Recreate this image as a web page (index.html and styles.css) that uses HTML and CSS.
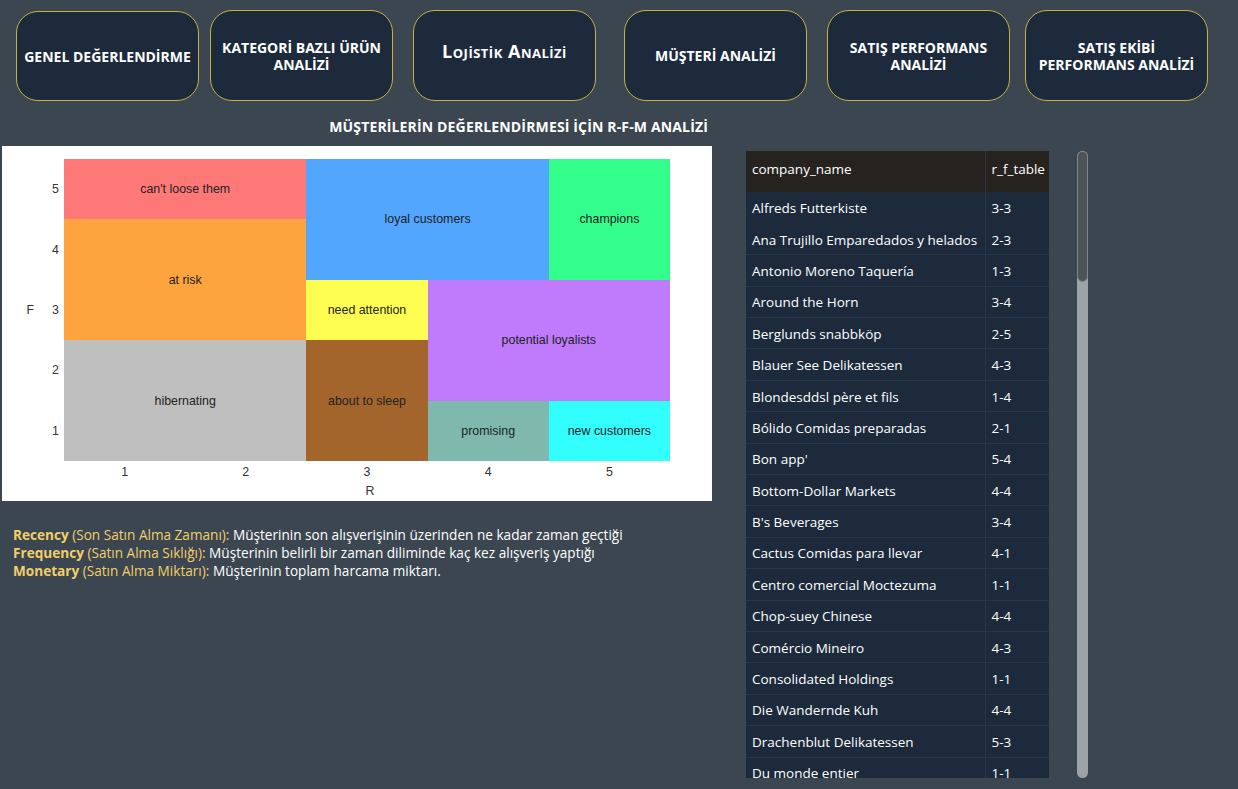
FILE: index.html
```html
<!DOCTYPE html>
<html lang="tr">
<head>
<meta charset="utf-8">
<title>Müşteri Analizi</title>
<link rel="stylesheet" href="styles.css">
</head>
<body>
<nav class="nav">
  <div class="btn b1">GENEL DEĞERLENDİRME</div>
  <div class="btn b2">KATEGORİ BAZLI ÜRÜN<br>ANALİZİ</div>
  <div class="btn b3 smallcaps">Lojistik Analizi</div>
  <div class="btn b4">MÜŞTERİ ANALİZİ</div>
  <div class="btn b5">SATIŞ PERFORMANS<br>ANALİZİ</div>
  <div class="btn b6">SATIŞ EKİBİ<br>PERFORMANS ANALİZİ</div>
</nav>
<main class="main">
  <section class="left">
    <h1 class="title">MÜŞTERİLERİN DEĞERLENDİRMESİ İÇİN R-F-M ANALİZİ</h1>
    <div class="chart">
      <div class="f-label">F</div>
      <div class="y-ticks"><span>5</span><span>4</span><span>3</span><span>2</span><span>1</span></div>
      <div class="plot">
        <div class="cell c-cant">can't loose them</div>
        <div class="cell c-risk">at risk</div>
        <div class="cell c-hib">hibernating</div>
        <div class="cell c-loyal">loyal customers</div>
        <div class="cell c-champ">champions</div>
        <div class="cell c-need">need attention</div>
        <div class="cell c-sleep">about to sleep</div>
        <div class="cell c-pot">potential loyalists</div>
        <div class="cell c-prom">promising</div>
        <div class="cell c-new">new customers</div>
      </div>
      <div class="x-ticks"><span>1</span><span>2</span><span>3</span><span>4</span><span>5</span></div>
      <div class="r-label">R</div>
    </div>
    <div class="legend">
      <p><b class="gold">Recency</b> <span class="gold">(Son Satın Alma Zamanı):</span> Müşterinin son alışverişinin üzerinden ne kadar zaman geçtiği</p>
      <p><b class="gold">Frequency</b> <span class="gold">(Satın Alma Sıklığı):</span> Müşterinin belirli bir zaman diliminde kaç kez alışveriş yaptığı</p>
      <p><b class="gold">Monetary</b> <span class="gold">(Satın Alma Miktarı):</span> Müşterinin toplam harcama miktarı.</p>
    </div>
  </section>
  <section class="right">
    <div class="table-wrap">
      <table class="tbl">
        <colgroup><col class="col-name"><col class="col-rf"></colgroup>
        <thead>
          <tr><th class="th-name">company_name</th><th>r_f_table</th></tr>
        </thead>
        <tbody>
          <tr><td>Alfreds Futterkiste</td><td>3-3</td></tr>
          <tr><td>Ana Trujillo Emparedados y helados</td><td>2-3</td></tr>
          <tr><td>Antonio Moreno Taquería</td><td>1-3</td></tr>
          <tr><td>Around the Horn</td><td>3-4</td></tr>
          <tr><td>Berglunds snabbköp</td><td>2-5</td></tr>
          <tr><td>Blauer See Delikatessen</td><td>4-3</td></tr>
          <tr><td>Blondesddsl père et fils</td><td>1-4</td></tr>
          <tr><td>Bólido Comidas preparadas</td><td>2-1</td></tr>
          <tr><td>Bon app'</td><td>5-4</td></tr>
          <tr><td>Bottom-Dollar Markets</td><td>4-4</td></tr>
          <tr><td>B's Beverages</td><td>3-4</td></tr>
          <tr><td>Cactus Comidas para llevar</td><td>4-1</td></tr>
          <tr><td>Centro comercial Moctezuma</td><td>1-1</td></tr>
          <tr><td>Chop-suey Chinese</td><td>4-4</td></tr>
          <tr><td>Comércio Mineiro</td><td>4-3</td></tr>
          <tr><td>Consolidated Holdings</td><td>1-1</td></tr>
          <tr><td>Die Wandernde Kuh</td><td>4-4</td></tr>
          <tr><td>Drachenblut Delikatessen</td><td>5-3</td></tr>
          <tr><td>Du monde entier</td><td>1-1</td></tr>
          <tr><td>Eastern Connection</td><td>2-2</td></tr>
        </tbody>
      </table>
    </div>
    <div class="scrollbar"><div class="thumb"></div></div>
  </section>
</main>
</body>
</html>
```

FILE: styles.css
```css
* { box-sizing: border-box; }
html, body { margin: 0; padding: 0; }
body {
  width: 1238px;
  height: 789px;
  overflow: hidden;
  background: #3b4651;
  font-family: "Open Sans", "Noto Sans", sans-serif;
  color: #ffffff;
}

/* navigation buttons */
.nav {
  display: flex;
  align-items: flex-start;
  height: 101px;
  padding: 10px 0 0 16px;
}
.btn {
  width: 183px;
  height: 91px;
  border: 1px solid #c9b046;
  border-radius: 22px;
  background: #1c2a3b;
  display: flex;
  align-items: center;
  justify-content: center;
  text-align: center;
  font-weight: 700;
  font-size: 14px;
  line-height: 17px;
  color: #ffffff;
}
.b1 { margin-top: 1px; height: 90px; }
.b2 { margin-left: 11px; }
.b3 { margin-left: 20px; padding-bottom: 8px; }
.b4 { margin-left: 28px; }
.b5 { margin-left: 20px; }
.b6 { margin-left: 15px; }
.smallcaps {
  font-variant: small-caps;
  font-size: 18px;
  letter-spacing: 0.5px;
}

/* main area */
.main {
  display: flex;
  align-items: flex-start;
}
.left {
  width: 710px;
  margin-left: 2px;
}
.title {
  margin: 17px 0 0 0;
  height: 18px;
  font-size: 14px;
  line-height: 18px;
  font-weight: 700;
  text-align: right;
  padding-right: 4px;
  letter-spacing: 0.15px;
}

/* chart */
.chart {
  margin-top: 10px;
  width: 710px;
  height: 355px;
  background: #ffffff;
  padding-top: 13px;
  display: grid;
  grid-template-columns: 42px 20px 606px;
  grid-template-rows: 302px 20px 20px;
  font-family: "Liberation Sans", Arial, sans-serif;
  color: #262626;
}
.f-label {
  grid-column: 1;
  grid-row: 1;
  align-self: center;
  text-align: right;
  padding-right: 10px;
  font-size: 12.4px;
  color: #333;
}
.y-ticks {
  grid-column: 2;
  grid-row: 1;
  display: flex;
  flex-direction: column;
  font-size: 12.4px;
  color: #333;
}
.y-ticks span {
  flex: 1;
  display: flex;
  align-items: center;
  justify-content: flex-end;
  padding-right: 5px;
}
.plot {
  grid-column: 3;
  grid-row: 1;
  display: grid;
  grid-template-columns: repeat(5, 1fr);
  grid-template-rows: repeat(5, 1fr);
}
.cell {
  display: flex;
  align-items: center;
  justify-content: center;
  font-size: 12.4px;
  color: #222;
}
.c-cant  { grid-column: 1 / 3; grid-row: 1 / 2; background: #fe7878; }
.c-risk  { grid-column: 1 / 3; grid-row: 2 / 4; background: #fea43e; }
.c-hib   { grid-column: 1 / 3; grid-row: 4 / 6; background: #bfbfbf; }
.c-loyal { grid-column: 3 / 5; grid-row: 1 / 3; background: #52a6fe; }
.c-champ { grid-column: 5 / 6; grid-row: 1 / 3; background: #33fe8c; }
.c-need  { grid-column: 3 / 4; grid-row: 3 / 4; background: #fefe52; }
.c-sleep { grid-column: 3 / 4; grid-row: 4 / 6; background: #a4652c; }
.c-pot   { grid-column: 4 / 6; grid-row: 3 / 5; background: #bf7bfc; }
.c-prom  { grid-column: 4 / 5; grid-row: 5 / 6; background: #7fb8ad; }
.c-new   { grid-column: 5 / 6; grid-row: 5 / 6; background: #33fefe; }
.x-ticks {
  grid-column: 3;
  grid-row: 2;
  display: flex;
  font-size: 12.4px;
  color: #333;
}
.x-ticks span {
  flex: 1;
  display: flex;
  align-items: center;
  justify-content: center;
  padding-top: 2px;
}
.r-label {
  grid-column: 3;
  grid-row: 3;
  text-align: center;
  font-size: 12.4px;
  line-height: 20px;
  color: #333;
  padding-left: 6px;
}

/* legend */
.legend {
  margin-top: 25px;
  padding-left: 11px;
  font-size: 13.6px;
  line-height: 18px;
}
.legend p { margin: 0; white-space: nowrap; }
.gold { color: #f1cf69; font-weight: 400; }
b.gold { font-weight: 700; }

/* table */
.right {
  display: flex;
  align-items: flex-start;
  margin-left: 34px;
  margin-top: 50px;
}
.table-wrap {
  width: 303px;
  height: 627px;
  overflow: hidden;
  background: #1c2a3b;
}
.tbl {
  width: 303px;
  table-layout: fixed;
  border-collapse: collapse;
  font-size: 13.5px;
  color: #ffffff;
}
.col-name { width: 239px; }
.col-rf { width: 64px; }
.tbl th {
  height: 41px;
  background: #26231f;
  font-weight: 400;
  text-align: left;
  padding: 0 6px 5px 6px;
  white-space: nowrap;
  overflow: hidden;
}
.th-name { border-right: 1px solid #2c3742; }
.tbl td {
  height: 31.4px;
  padding: 1px 6px 0 6px;
  white-space: nowrap;
  overflow: hidden;
  border-top: 1px solid #283747;
}
.tbl td:first-child { border-right: 1px solid #283747; }
.tbl tbody tr:first-child td,
.tbl tbody tr:nth-child(2) td { border-top-color: #1c2a3b; }

/* scrollbar */
.scrollbar {
  margin-left: 28px;
  width: 11px;
  height: 627px;
  border-radius: 6px;
  background: #9ea3aa;
}
.thumb {
  width: 11px;
  height: 131px;
  border-radius: 6px;
  background: #4e5358;
  border: 1px solid #7f868e;
}
```
